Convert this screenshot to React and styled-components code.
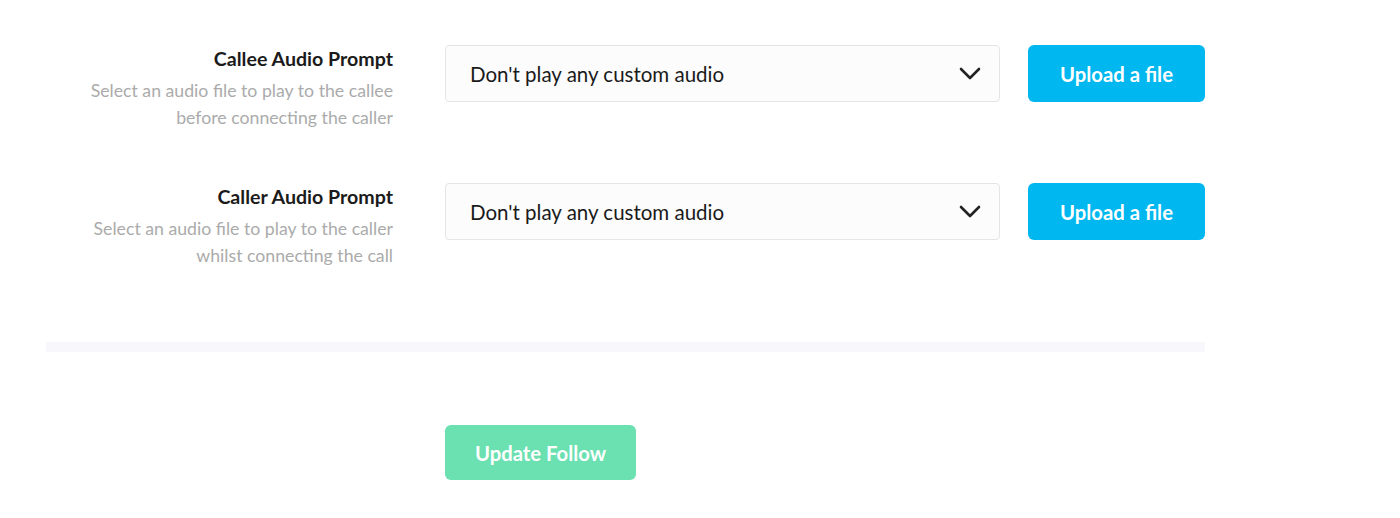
import React from "react";
import styled, { createGlobalStyle } from "styled-components";

const Global = createGlobalStyle`
  html, body { margin: 0; padding: 0; background: #fff; }
  body { font-family: "Lato", "Noto Sans", sans-serif; }
`;

const Page = styled.div`
  padding: 45px 0 0 46px;
  width: 1159px;
`;

const Row = styled.div`
  display: flex;
  align-items: flex-start;
  margin-bottom: ${(p) => (p.$last ? 0 : 52)}px;
`;

const LabelCol = styled.div`
  width: 347px;
  margin-right: 52px;
  text-align: right;
  flex-shrink: 0;
`;

const Title = styled.div`
  font-weight: 700;
  font-size: 19.6px;
  line-height: 28px;
  color: #1b1b1b;
  margin-bottom: 4px;
`;

const Desc = styled.div`
  font-size: 17.7px;
  line-height: 27px;
  color: #ababab;
`;

const Select = styled.div`
  width: 555px;
  height: 57px;
  box-sizing: border-box;
  border: 1px solid #e5e5e5;
  border-radius: 4px;
  background: #fcfcfc;
  display: flex;
  align-items: center;
  justify-content: space-between;
  padding: 0 18px 0 24px;
  font-size: 20.5px;
  color: #1a1a1a;
  margin-right: 28px;
`;

const Button = styled.button`
  border: none;
  border-radius: 6px;
  background: ${(p) => p.$bg};
  color: #fff;
  font-family: inherit;
  font-weight: 700;
  font-size: 20.3px;
  width: ${(p) => p.$w}px;
  height: ${(p) => p.$h}px;
  padding: 0;
  cursor: pointer;
`;

const Divider = styled.div`
  height: 10px;
  background: #f8f8fc;
  margin-top: 73px;
`;

const Footer = styled.div`
  padding-left: 399px;
  margin-top: 73px;
`;

const Chevron = () => (
  <svg width="22" height="14" viewBox="0 0 22 14">
    <path d="M2 2 L11 11 L20 2" fill="none" stroke="#222" strokeWidth="2.6" strokeLinecap="round" strokeLinejoin="round" />
  </svg>
);

const rows = [
  { title: "Callee Audio Prompt", d1: "Select an audio file to play to the callee", d2: "before connecting the caller" },
  { title: "Caller Audio Prompt", d1: "Select an audio file to play to the caller", d2: "whilst connecting the call" },
];

export default function App() {
  return (
    <>
      <Global />
      <Page>
        {rows.map((r, i) => (
          <Row key={i} $last={i === rows.length - 1}>
            <LabelCol>
              <Title>{r.title}</Title>
              <Desc>{r.d1}</Desc>
              <Desc>{r.d2}</Desc>
            </LabelCol>
            <Select>
              <span>Don't play any custom audio</span>
              <Chevron />
            </Select>
            <Button $bg="#00b8ef" $w={177} $h={57}>Upload a file</Button>
          </Row>
        ))}
        <Divider />
        <Footer>
          <Button $bg="#6be0b0" $w={191} $h={55}>Update Follow</Button>
        </Footer>
      </Page>
    </>
  );
}
